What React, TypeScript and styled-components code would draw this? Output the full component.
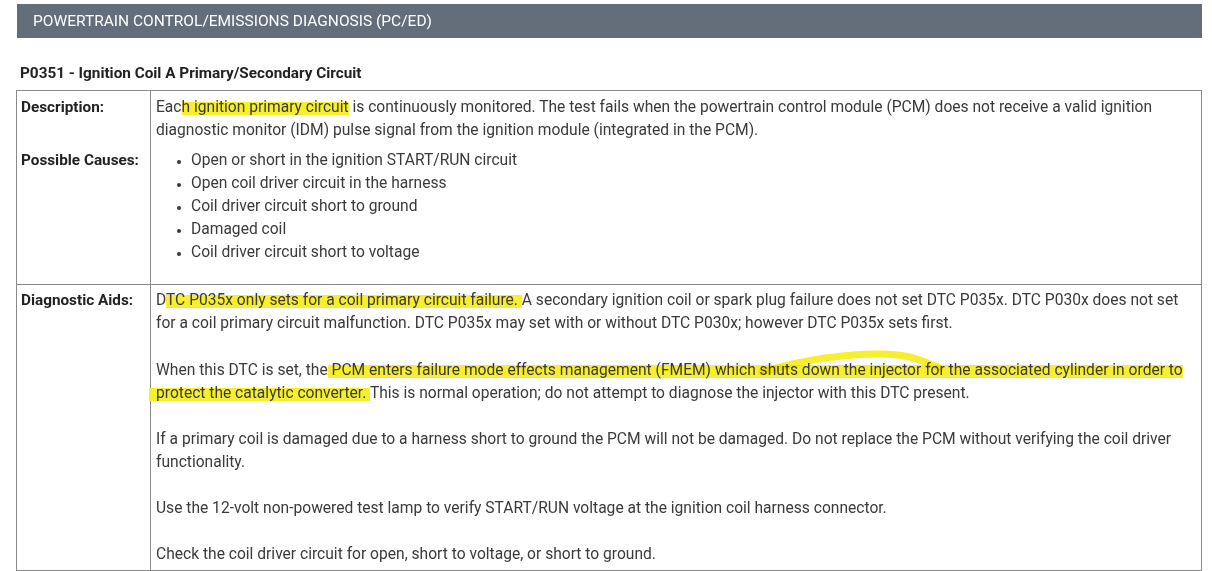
import React from 'react';
import styled, { createGlobalStyle } from 'styled-components';

const GlobalStyle = createGlobalStyle`
    html, body {
        margin: 0;
        padding: 0;
        background: #ffffff;
    }
    body {
        font-family: Roboto, "Liberation Sans", Arial, sans-serif;
        color: #3a3a3a;
        overflow: hidden;
    }
`;

const Page = styled.div`
    padding: 4px 10px 0 16px;
    width: 1186px;
`;

const SectionBar = styled.div`
    margin-left: 1px;
    height: 34px;
    display: flex;
    align-items: center;
    padding-left: 16px;
    background: #636e7a;
    color: #ffffff;
    font-size: 15.5px;
`;

const CodeTitle = styled.h2`
    margin: 25px 0 7px 4px;
    font-size: 15.3px;
    font-weight: 700;
    color: #222;
    line-height: 20px;
`;

const Table = styled.table`
    width: 1186px;
    border-collapse: collapse;
    table-layout: fixed;
    font-size: 15.6px;
    line-height: 23px;
`;

const Row = styled.tr<{ $divided?: boolean }>`
    border-left: 1px solid #8a8a8a;
    border-right: 1px solid #8a8a8a;
    border-top: ${p => (p.$divided ? '1px solid #8a8a8a' : 'none')};
`;

const LabelCell = styled.td<{ $top?: number; $bottom?: number }>`
    width: 125px;
    vertical-align: top;
    padding: ${p => p.$top ?? 4}px 4px ${p => p.$bottom ?? 4}px 4px;
    border-right: 1px solid #8a8a8a;
    font-size: 15.3px;
    font-weight: 700;
    color: #222;
`;

const ContentCell = styled.td<{ $top?: number; $bottom?: number }>`
    vertical-align: top;
    padding: ${p => p.$top ?? 4}px 8px ${p => p.$bottom ?? 4}px 5px;
`;

const Para = styled.p<{ $gap?: number }>`
    position: relative;
    margin: 0 0 ${p => p.$gap ?? 23}px;
    &:last-child {
        margin-bottom: 0;
    }
`;

const Causes = styled.ul`
    margin: 0;
    padding-left: 35px;
    li::marker {
        font-size: 12px;
    }
`;

const Mark = styled.span<{ $lead?: number }>`
    background: linear-gradient(to bottom, transparent 24%, #f7ee2e 24%, #f7ee2e 92%, transparent 92%);
    padding-left: ${p => p.$lead ?? 0}px;
    margin-left: ${p => -(p.$lead ?? 0)}px;
`;

const Swoosh = styled.svg`
    position: absolute;
    left: 600px;
    top: -14px;
    width: 200px;
    height: 30px;
    overflow: visible;
    pointer-events: none;
    mix-blend-mode: multiply;
`;

const NextRow = styled.div`
    display: grid;
    grid-template-columns: 163px 285px 366px 1fr;
    height: 6px;
    border-top: 1px solid #8a8a8a;
    border-left: 1px solid #8a8a8a;
`;

const NextCell = styled.div`
    border-right: 1px solid #8a8a8a;
`;

const causes = [
    'Open or short in the ignition START/RUN circuit',
    'Open coil driver circuit in the harness',
    'Coil driver circuit short to ground',
    'Damaged coil',
    'Coil driver circuit short to voltage',
];

export default function App() {
    return (
        <>
            <GlobalStyle />
            <Page>
                <SectionBar>POWERTRAIN CONTROL/EMISSIONS DIAGNOSIS (PC/ED)</SectionBar>
                <CodeTitle>P0351 - Ignition Coil A Primary/Secondary Circuit</CodeTitle>
                <Table>
                    <tbody>
                        <Row $divided>
                            <LabelCell $top={5} $bottom={7}>Description:</LabelCell>
                            <ContentCell $top={5} $bottom={7}>
                                Eac<Mark>h ignition primary circuit</Mark> is continuously monitored. The test fails when the
                                powertrain control module (PCM) does not receive a valid ignition diagnostic monitor (IDM)
                                pulse signal from the ignition module (integrated in the PCM).
                            </ContentCell>
                        </Row>
                        <Row>
                            <LabelCell $top={0} $bottom={20}>Possible Causes:</LabelCell>
                            <ContentCell $top={0} $bottom={20}>
                                <Causes>
                                    {causes.map(c => (
                                        <li key={c}>{c}</li>
                                    ))}
                                </Causes>
                            </ContentCell>
                        </Row>
                        <Row $divided>
                            <LabelCell $top={4}>Diagnostic Aids:</LabelCell>
                            <ContentCell $top={4} $bottom={4}>
                                <Para $gap={24}>
                                    D<Mark>TC P035x only sets for a coil primary circuit failure. </Mark>A secondary ignition
                                    coil or spark plug failure does not set DTC P035x. DTC P030x does not set for a coil
                                    primary circuit malfunction. DTC P035x may set with or without DTC P030x; however DTC
                                    P035x sets first.
                                </Para>
                                <Para>
                                    When this DTC is set, the<Mark> PCM enters failure mode effects management (FMEM) which
                                    shuts down the injector for the associated cylinder in order to</Mark>{' '}
                                    <Mark $lead={7}>protect the catalytic converter. </Mark>This is normal operation; do not
                                    attempt to diagnose the injector with this DTC present.
                                    <Swoosh viewBox="0 0 200 30">
                                        <path
                                            d="M6 27 C 50 14, 95 8, 128 9 C 158 10, 168 17, 184 23"
                                            fill="none"
                                            stroke="#f7ee2e"
                                            strokeWidth="7"
                                            strokeLinecap="round"
                                        />
                                    </Swoosh>
                                </Para>
                                <Para>
                                    If a primary coil is damaged due to a harness short to ground the PCM will not be
                                    damaged. Do not replace the PCM without verifying the coil driver functionality.
                                </Para>
                                <Para>
                                    Use the 12-volt non-powered test lamp to verify START/RUN voltage at the ignition coil
                                    harness connector.
                                </Para>
                                <Para>Check the coil driver circuit for open, short to voltage, or short to ground.</Para>
                            </ContentCell>
                        </Row>
                    </tbody>
                </Table>
                <NextRow>
                    <NextCell />
                    <NextCell />
                    <NextCell />
                    <NextCell />
                </NextRow>
            </Page>
        </>
    );
}
